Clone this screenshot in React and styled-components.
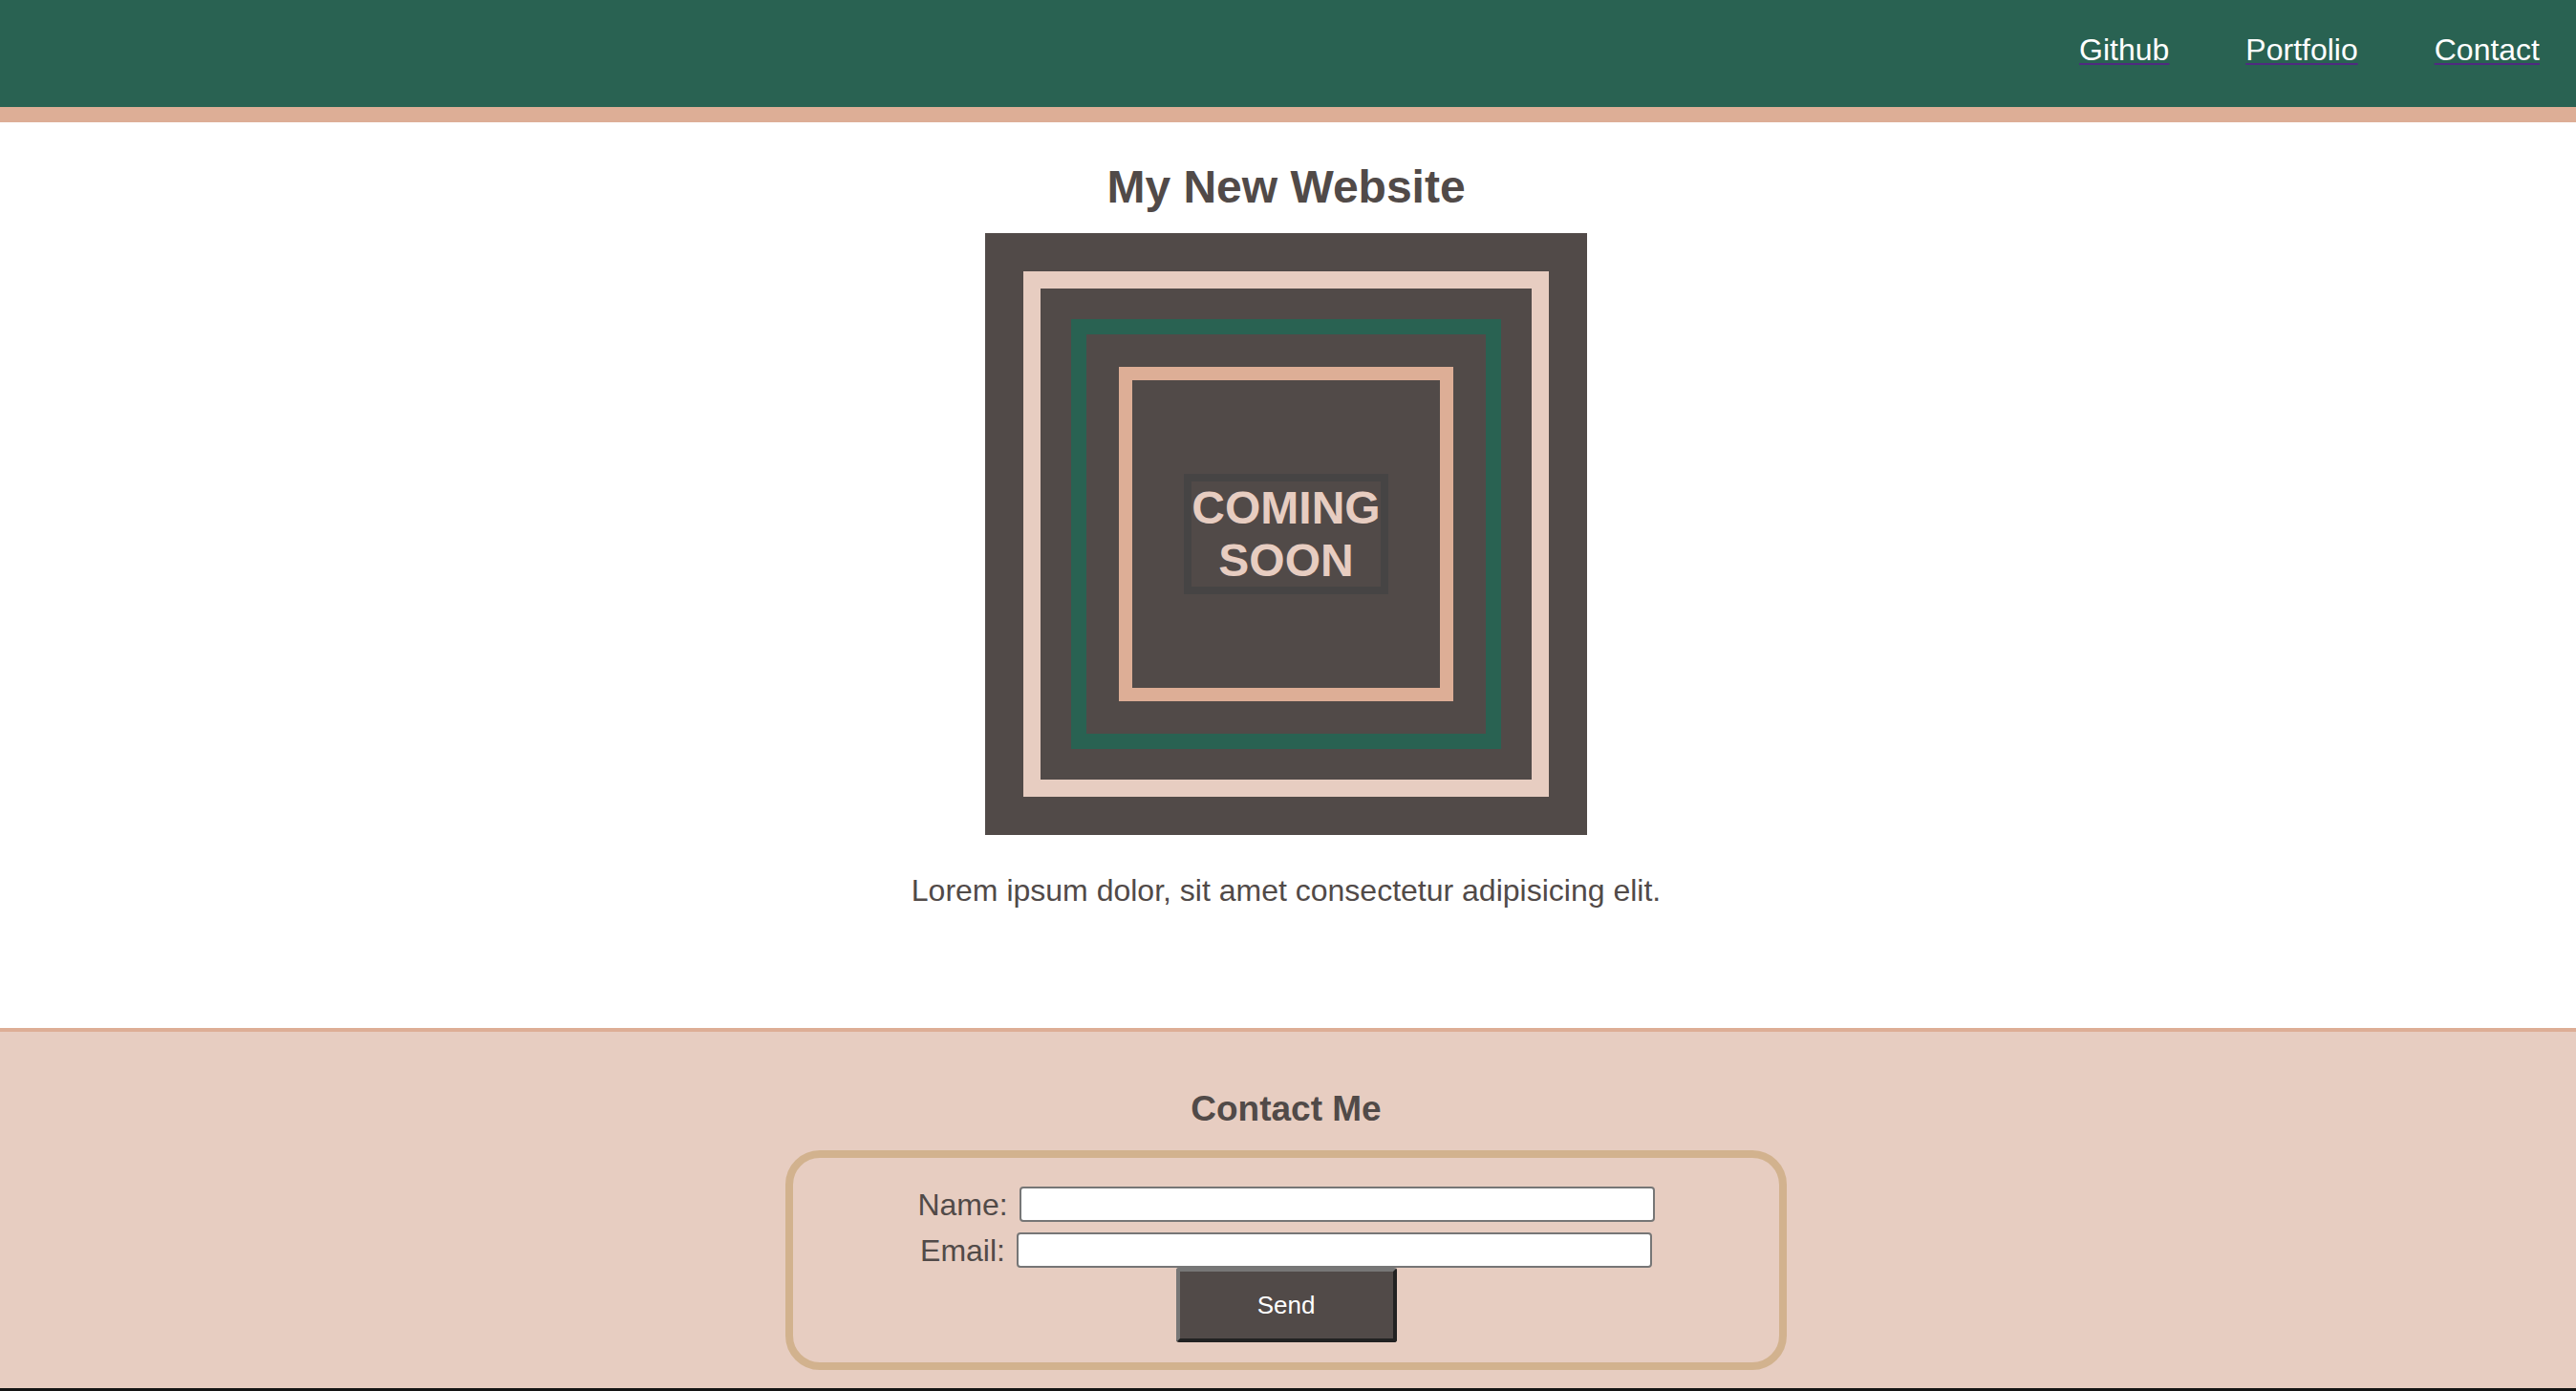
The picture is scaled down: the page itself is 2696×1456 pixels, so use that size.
import React from "react";
import styled, { createGlobalStyle } from "styled-components";

const GlobalStyle = createGlobalStyle`
  html, body {
    margin: 0;
    padding: 0;
    background: #141414;
  }
  body {
    font-family: "Liberation Sans", Arial, Helvetica, sans-serif;
  }
  * { box-sizing: border-box; }
`;

const Page = styled.div`
  display: flex;
  flex-direction: column;
  width: 100%;
  background: #ffffff;
`;

const Header = styled.header`
  height: 128px;
  background: #296252;
  border-bottom: 16px solid #ddae96;
  display: flex;
  justify-content: flex-end;
  align-items: flex-start;
  padding: 34px 38px 0 0;
`;

const NavList = styled.ul`
  list-style: none;
  margin: 0;
  padding: 0;
  display: flex;
  gap: 80px;
`;

const NavLink = styled.a`
  color: #ffffff;
  font-size: 32px;
  line-height: normal;
  text-decoration: underline;
  text-decoration-color: #4f2a80;
  text-decoration-thickness: 2px;
  text-underline-offset: 3px;
`;

const Main = styled.main`
  display: flex;
  flex-direction: column;
  align-items: center;
  padding: 40px 4px 126px 0;
  background: #ffffff;
`;

const Title = styled.h1`
  margin: 0 0 21px;
  font-size: 48px;
  line-height: 55px;
  font-weight: 700;
  color: #514a48;
`;

const Poster = styled.div`
  width: 630px;
  height: 630px;
  background: #514a48;
  padding: 40px;
  display: flex;
`;

const Frame = styled.div`
  flex: 1;
  display: flex;
  align-items: ${(p) => (p.$center ? "center" : "stretch")};
  justify-content: ${(p) => (p.$center ? "center" : "stretch")};
  border: ${(p) => p.$w}px solid ${(p) => p.$c};
  padding: ${(p) => p.$pad}px;
`;

const Badge = styled.div`
  border: 8px solid #464444;
  color: #e7cdc1;
  font-size: 48px;
  font-weight: 700;
  line-height: 55px;
  text-align: center;
`;

const Lead = styled.p`
  margin: 40px 0 0;
  font-size: 32px;
  line-height: 36px;
  color: #514a48;
`;

const Footer = styled.footer`
  background: #e7cdc1;
  border-top: 4px solid #ddae96;
  padding: 60px 4px 19px 0;
  display: flex;
  flex-direction: column;
  align-items: center;
`;

const SubTitle = styled.h3`
  margin: 0 0 22px;
  font-size: 37px;
  line-height: 42px;
  font-weight: 700;
  color: #514a48;
`;

const Form = styled.form`
  width: 1048px;
  border: 8px solid #d2b28e;
  border-radius: 36px;
  padding: 30px 0 21px;
  display: flex;
  flex-direction: column;
  align-items: center;
`;

const Row = styled.div`
  display: flex;
  align-items: center;
  justify-content: center;
  gap: 12px;
  margin-bottom: ${(p) => p.$mb || 0}px;
`;

const Label = styled.label`
  font-size: 32px;
  color: #514a48;
  line-height: 36px;
`;

const Input = styled.input`
  width: 665px;
  height: 37px;
  border: 2px solid #767676;
  border-radius: 4px;
  background: #ffffff;
  padding: 0 6px;
  font-size: 20px;
  font-family: inherit;
`;

const SendButton = styled.button`
  width: 231px;
  height: 78px;
  background: #514a48;
  color: #ffffff;
  font-family: "Liberation Sans", Arial, sans-serif;
  font-size: 26px;
  border-style: solid;
  border-width: 4px;
  border-color: #777777 #222222 #222222 #777777;
  border-radius: 3px;
  cursor: pointer;
`;

const BottomEdge = styled.div`
  height: 3px;
  background: #141414;
`;

export default function App() {
  return (
    <>
      <GlobalStyle />
      <Page>
        <Header>
          <NavList>
            <li><NavLink href="#">Github</NavLink></li>
            <li><NavLink href="#">Portfolio</NavLink></li>
            <li><NavLink href="#">Contact</NavLink></li>
          </NavList>
        </Header>
        <Main>
          <Title>My New Website</Title>
          <Poster>
            <Frame $w={18} $c="#e7cdc1" $pad={32}>
              <Frame $w={16} $c="#296252" $pad={34}>
                <Frame $w={14} $c="#ddae96" $pad={0} $center>
                  <Badge>
                    COMING
                    <br />
                    SOON
                  </Badge>
                </Frame>
              </Frame>
            </Frame>
          </Poster>
          <Lead>Lorem ipsum dolor, sit amet consectetur adipisicing elit.</Lead>
        </Main>
        <Footer>
          <SubTitle>Contact Me</SubTitle>
          <Form onSubmit={(e) => e.preventDefault()}>
            <Row $mb={11}>
              <Label htmlFor="name">Name:</Label>
              <Input id="name" type="text" />
            </Row>
            <Row>
              <Label htmlFor="email">Email:</Label>
              <Input id="email" type="email" />
            </Row>
            <SendButton type="submit">Send</SendButton>
          </Form>
        </Footer>
        <BottomEdge />
      </Page>
    </>
  );
}
